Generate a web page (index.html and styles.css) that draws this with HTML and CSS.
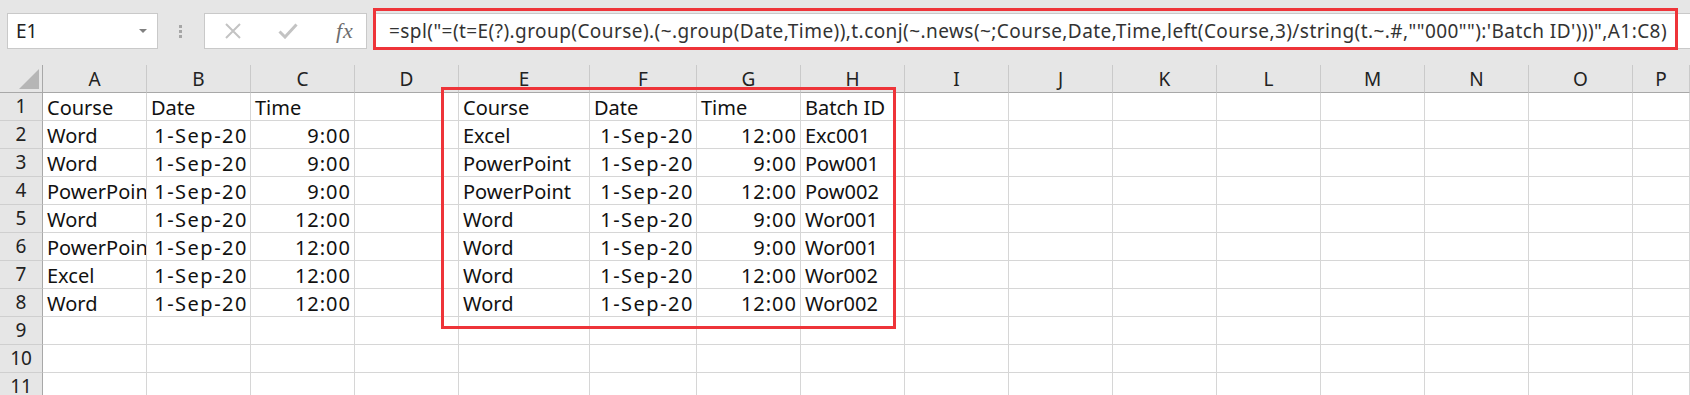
FILE: index.html
```html
<!DOCTYPE html>
<html>
<head>
<meta charset="utf-8">
<link rel="stylesheet" href="styles.css">
</head>
<body>
<div class="app">
  <div class="toolbar">
    <div class="namebox"><span class="ref">E1</span><span class="caret"></span></div>
    <div class="grip"><i></i><i></i><i></i></div>
    <div class="fbtns">
      <svg class="ico" width="18" height="16" viewBox="0 0 18 16"><path d="M2 1 L16 15 M16 1 L2 15" stroke="#c3c3c3" stroke-width="2" fill="none"/></svg>
      <svg class="ico" width="20" height="16" viewBox="0 0 20 16"><path d="M1.5 8.5 L7 14 L18.5 1.5" stroke="#c3c3c3" stroke-width="3" fill="none"/></svg>
      <span class="fx">fx</span>
    </div>
    <div class="formula">=spl("=(t=E(?).group(Course).(~.group(Date,Time)),t.conj(~.news(~;Course,Date,Time,left(Course,3)/string(t.~.#,""000""):'Batch ID')))",A1:C8)</div>
  </div>
  <div class="sheet">
    <div class="row hdr"><b class="corner"><span class="tri"></span></b><b>A</b><b>B</b><b>C</b><b>D</b><b>E</b><b>F</b><b>G</b><b>H</b><b>I</b><b>J</b><b>K</b><b>L</b><b>M</b><b>N</b><b>O</b><b>P</b></div>
    <div class="row"><b>1</b><i>Course</i><i>Date</i><i>Time</i><i></i><i>Course</i><i>Date</i><i>Time</i><i>Batch ID</i><i></i><i></i><i></i><i></i><i></i><i></i><i></i><i></i></div>
    <div class="row"><b>2</b><i>Word</i><i class="d">1-Sep-20</i><i class="t">9:00</i><i></i><i>Excel</i><i class="d">1-Sep-20</i><i class="t">12:00</i><i>Exc001</i><i></i><i></i><i></i><i></i><i></i><i></i><i></i><i></i></div>
    <div class="row"><b>3</b><i>Word</i><i class="d">1-Sep-20</i><i class="t">9:00</i><i></i><i>PowerPoint</i><i class="d">1-Sep-20</i><i class="t">9:00</i><i>Pow001</i><i></i><i></i><i></i><i></i><i></i><i></i><i></i><i></i></div>
    <div class="row"><b>4</b><i>PowerPoint</i><i class="d">1-Sep-20</i><i class="t">9:00</i><i></i><i>PowerPoint</i><i class="d">1-Sep-20</i><i class="t">12:00</i><i>Pow002</i><i></i><i></i><i></i><i></i><i></i><i></i><i></i><i></i></div>
    <div class="row"><b>5</b><i>Word</i><i class="d">1-Sep-20</i><i class="t">12:00</i><i></i><i>Word</i><i class="d">1-Sep-20</i><i class="t">9:00</i><i>Wor001</i><i></i><i></i><i></i><i></i><i></i><i></i><i></i><i></i></div>
    <div class="row"><b>6</b><i>PowerPoint</i><i class="d">1-Sep-20</i><i class="t">12:00</i><i></i><i>Word</i><i class="d">1-Sep-20</i><i class="t">9:00</i><i>Wor001</i><i></i><i></i><i></i><i></i><i></i><i></i><i></i><i></i></div>
    <div class="row"><b>7</b><i>Excel</i><i class="d">1-Sep-20</i><i class="t">12:00</i><i></i><i>Word</i><i class="d">1-Sep-20</i><i class="t">12:00</i><i>Wor002</i><i></i><i></i><i></i><i></i><i></i><i></i><i></i><i></i></div>
    <div class="row"><b>8</b><i>Word</i><i class="d">1-Sep-20</i><i class="t">12:00</i><i></i><i>Word</i><i class="d">1-Sep-20</i><i class="t">12:00</i><i>Wor002</i><i></i><i></i><i></i><i></i><i></i><i></i><i></i><i></i></div>
    <div class="row"><b>9</b><i></i><i></i><i></i><i></i><i></i><i></i><i></i><i></i><i></i><i></i><i></i><i></i><i></i><i></i><i></i><i></i></div>
    <div class="row"><b>10</b><i></i><i></i><i></i><i></i><i></i><i></i><i></i><i></i><i></i><i></i><i></i><i></i><i></i><i></i><i></i><i></i></div>
    <div class="row"><b>11</b><i></i><i></i><i></i><i></i><i></i><i></i><i></i><i></i><i></i><i></i><i></i><i></i><i></i><i></i><i></i><i></i></div>
  </div>
  <div class="mark mark-formula"></div>
  <div class="mark mark-table"></div>
</div>
</body>
</html>
```
FILE: styles.css
```css
* { box-sizing: border-box; margin: 0; padding: 0; }
html, body { width: 1690px; height: 395px; overflow: hidden; background: #fff; }
body { font-family: "Noto Sans", "Liberation Sans", sans-serif; color: #111; }
.app { position: relative; width: 1690px; height: 395px; overflow: hidden; }

.toolbar {
  height: 65px;
  background: #e6e6e6;
  display: flex;
  align-items: flex-start;
  padding-top: 13px;
}
.namebox {
  margin-left: 7px;
  width: 151px;
  height: 36px;
  background: #fff;
  border: 1px solid #c9c9c9;
  display: flex;
  align-items: center;
  justify-content: space-between;
  padding: 0 10px 0 8px;
}
.ref { font-size: 19px; color: #222; }
.caret {
  width: 0; height: 0;
  border-left: 4px solid transparent;
  border-right: 4px solid transparent;
  border-top: 4px solid #808080;
}
.grip {
  margin-left: 21px;
  width: 4px;
  height: 36px;
  display: flex;
  flex-direction: column;
  justify-content: center;
  gap: 2px;
}
.grip i { display: block; width: 3px; height: 3px; background: #a6a6a6; }
.fbtns {
  margin-left: 21px;
  width: 163px;
  height: 36px;
  background: #fff;
  border: 1px solid #c9c9c9;
  display: flex;
  align-items: center;
  padding-left: 19px;
  gap: 36px;
}
.fx {
  font-family: "Liberation Serif", "DejaVu Serif", serif;
  font-style: italic;
  font-size: 22px;
  color: #6d6d6d;
  letter-spacing: 1px;
  margin-left: 2px;
}
.formula {
  margin-left: 6px;
  flex: 1;
  height: 36px;
  background: #fff;
  border: 1px solid #c9c9c9;
  border-right: none;
  font-size: 19px;
  letter-spacing: 0.43px;
  color: #333;
  padding-left: 15px;
  line-height: 34px;
  white-space: nowrap;
  overflow: hidden;
}

.sheet { width: 1690px; }
.row {
  display: grid;
  grid-template-columns: 43px 104px 104px 104px 104px 131px 107px 104px 104px 104px 104px 104px 104px 104px 104px 104px 1fr;
  height: 28px;
}
.row > i, .row > b {
  display: block;
  font-style: normal;
  font-weight: normal;
  border-right: 1px solid #d6d6d6;
  border-bottom: 1px solid #d6d6d6;
  font-size: 20px;
  line-height: 27px;
  padding: 1px 4px 0 4px;
  white-space: nowrap;
  overflow: hidden;
}
.row > i.d { text-align: right; padding-right: 2px; letter-spacing: 1.5px; }
.row > i.t { text-align: right; padding-right: 3px; letter-spacing: 1px; }
.row > b {
  background: #e6e6e6;
  text-align: center;
  padding: 0;
  font-size: 19px;
  border-bottom-color: #cfcfcf;
  border-right-color: #a8a8a8;
  color: #222;
}
.hdr > b {
  background: #e6e6e6;
  border-right: 1px solid #cacaca;
  border-bottom: 1px solid #a8a8a8;
  line-height: 28px;
  padding-top: 0;
}
.hdr > b.corner { border-right-color: #a8a8a8; position: relative; }
.tri {
  position: absolute;
  right: 3px;
  bottom: 3px;
  width: 0; height: 0;
  border-left: 20px solid transparent;
  border-bottom: 20px solid #b6b6b6;
}

.mark { position: absolute; border: 3px solid #ee3439; pointer-events: none; }
.mark-formula { left: 373px; top: 8px; width: 1305px; height: 42px; }
.mark-table { left: 441px; top: 87px; width: 455px; height: 242px; }
```
